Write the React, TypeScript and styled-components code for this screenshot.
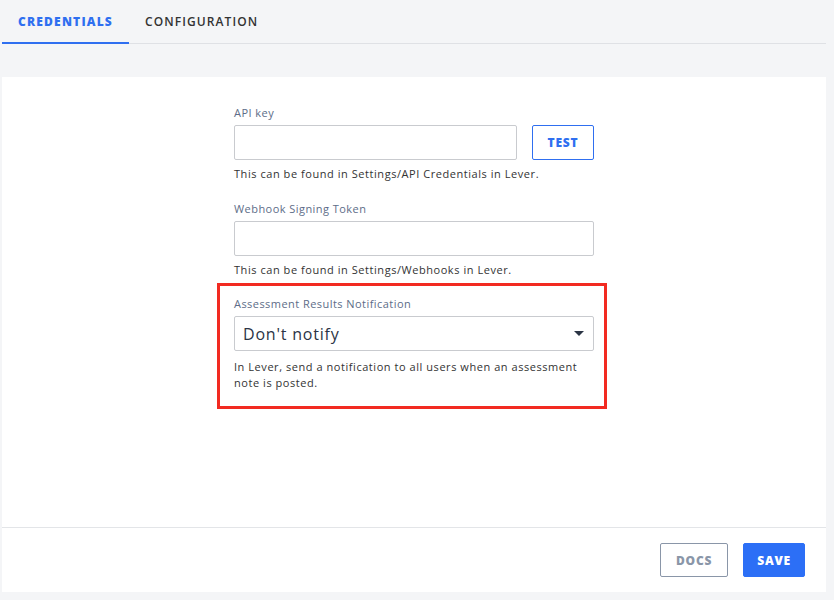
import { createGlobalStyle } from 'styled-components';
import styled from 'styled-components';

const GlobalStyle = createGlobalStyle`
  html, body {
    margin: 0;
    padding: 0;
    background: #f4f5f7;
    font-family: "Open Sans", "Liberation Sans", sans-serif;
    color: #333;
  }
`;

const Page = styled.div`
  width: 824px;
  padding: 0 8px 8px 2px;
`;

const TabBar = styled.div`
  display: flex;
  height: 43px;
  border-bottom: 1px solid #dfe1e5;
`;

const Tab = styled.div<{ $active?: boolean }>`
  display: flex;
  align-items: center;
  padding: 0 16px;
  margin-bottom: -1px;
  font-size: 12px;
  font-weight: ${({ $active }) => ($active ? 800 : 600)};
  letter-spacing: ${({ $active }) => ($active ? '1.2px' : '1.1px')};
  color: ${({ $active }) => ($active ? '#2f6ff0' : '#333')};
  border-bottom: 2px solid ${({ $active }) => ($active ? '#2f6ff0' : 'transparent')};
`;

const Card = styled.div`
  margin-top: 33px;
  background: #fff;
`;

const Body = styled.div`
  height: 451px;
  box-sizing: border-box;
  padding-top: 28px;
  display: flex;
  justify-content: center;
  border-bottom: 1px solid #e3e5e8;
`;

const Column = styled.div`
  width: 360px;
  display: flex;
  flex-direction: column;
`;

const Field = styled.div<{ $highlight?: boolean }>`
  display: flex;
  flex-direction: column;
  margin-bottom: 19px;
  ${({ $highlight }) =>
    $highlight &&
    `
    margin: -14px -13px 0 -17px;
    padding: 10px 10px 15px 14px;
    border: 3px solid #f22a21;
  `}
`;

const Label = styled.label`
  font-size: 11px;
  line-height: 16px;
  letter-spacing: 0.45px;
  color: #5d6d88;
  margin-bottom: 4px;
`;

const Row = styled.div`
  display: flex;
  gap: 15px;
`;

const Input = styled.input`
  display: block;
  width: 100%;
  min-width: 0;
  height: 35px;
  box-sizing: border-box;
  border: 1px solid #c9cbcf;
  border-radius: 2px;
  font-family: inherit;
  font-size: 14px;
  padding: 0 8px;
  outline: none;
`;

const Select = styled.div`
  display: flex;
  align-items: center;
  justify-content: space-between;
  height: 35px;
  box-sizing: border-box;
  border: 1px solid #c9cbcf;
  border-radius: 2px;
  padding: 0 9px 0 8px;
  font-size: 16px;
  font-weight: 500;
  letter-spacing: 0.8px;
  color: #2b3445;
`;

const Caret = styled.span`
  width: 0;
  height: 0;
  border-left: 5px solid transparent;
  border-right: 5px solid transparent;
  border-top: 5px solid #2b3445;
`;

const Help = styled.div<{ $loose?: boolean }>`
  margin-top: ${({ $loose }) => ($loose ? '8px' : '6px')};
  font-size: 11px;
  line-height: 16px;
  letter-spacing: 0.55px;
  color: #333;
`;

const Button = styled.button<{ $variant: 'outline' | 'muted' | 'primary' }>`
  flex: none;
  height: ${({ $variant }) => ($variant === 'outline' ? '35px' : '34px')};
  box-sizing: border-box;
  padding: 0 ${({ $variant }) => ($variant === 'primary' ? '13px' : '15px')};
  border-radius: 2px;
  font-family: inherit;
  font-size: 12px;
  font-weight: 800;
  letter-spacing: 0.8px;
  cursor: pointer;
  background: ${({ $variant }) => ($variant === 'primary' ? '#2c6ff6' : '#fff')};
  color: ${({ $variant }) =>
    $variant === 'primary' ? '#fff' : $variant === 'outline' ? '#2f6ff0' : '#8a96a8'};
  border: 1px solid
    ${({ $variant }) =>
      $variant === 'primary' ? '#2c6ff6' : $variant === 'outline' ? '#2f6ff0' : '#8a96a8'};
`;

const TestButton = styled(Button)`
  width: 62px;
  padding: 0;
`;

const Footer = styled.div`
  display: flex;
  justify-content: flex-end;
  gap: 15px;
  padding: 15px 21px 15px 0;
`;

export default function App() {
  return (
    <Page>
      <GlobalStyle />
      <TabBar>
        <Tab $active>CREDENTIALS</Tab>
        <Tab>CONFIGURATION</Tab>
      </TabBar>
      <Card>
        <Body>
          <Column>
            <Field>
              <Label>API key</Label>
              <Row>
                <Input />
                <TestButton $variant="outline">TEST</TestButton>
              </Row>
              <Help>This can be found in Settings/API Credentials in Lever.</Help>
            </Field>
            <Field>
              <Label>Webhook Signing Token</Label>
              <Input />
              <Help>This can be found in Settings/Webhooks in Lever.</Help>
            </Field>
            <Field $highlight>
              <Label>Assessment Results Notification</Label>
              <Select>
                Don't notify
                <Caret />
              </Select>
              <Help $loose>
                In Lever, send a notification to all users when an assessment
                note is posted.
              </Help>
            </Field>
          </Column>
        </Body>
        <Footer>
          <Button $variant="muted">DOCS</Button>
          <Button $variant="primary">SAVE</Button>
        </Footer>
      </Card>
    </Page>
  );
}
